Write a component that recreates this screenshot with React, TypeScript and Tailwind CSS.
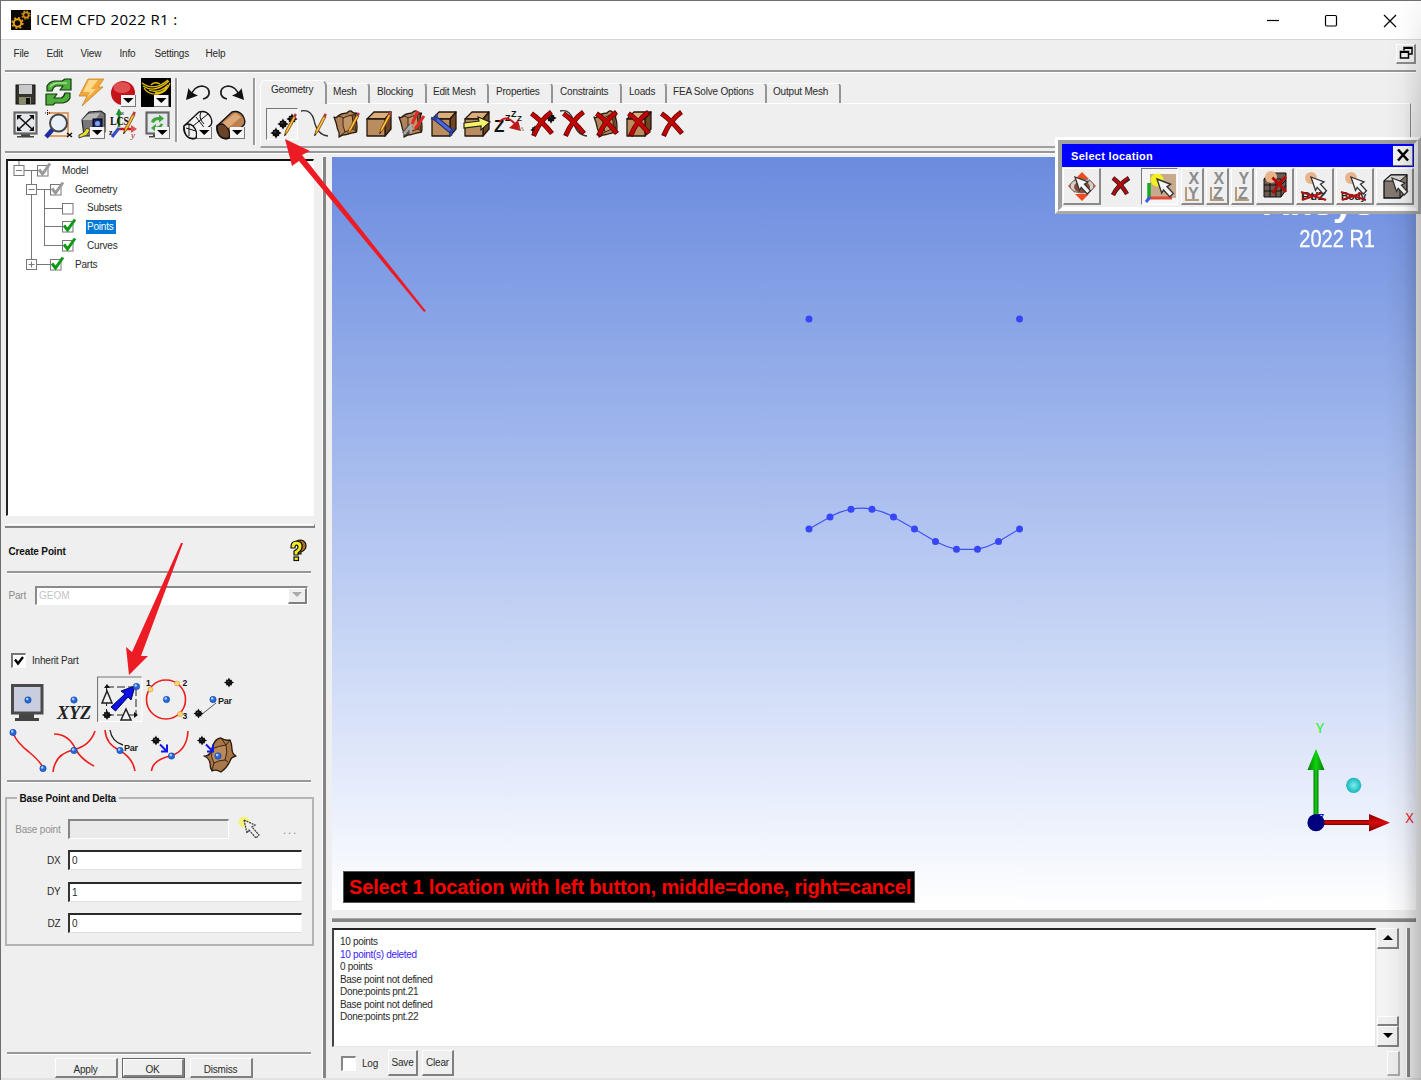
import React from "react";

type Kids = { children?: React.ReactNode };

/* ---------- shared drawing parts ---------- */

function Ico({ children, w = 33, h = 32, c = "" }: Kids & { w?: number; h?: number; c?: string }) {
  return (
    <svg width={w} height={h} viewBox={`0 0 ${w} ${h}`} className={`shrink-0 ${c}`} fill="none">
      {children}
    </svg>
  );
}

const Drop = ({ x = 16, y = 17 }) => (
  <g transform={`translate(${x} ${y})`}>
    <rect width="15" height="12" fill="#777" />
    <rect width="14" height="11" fill="#f4f4f4" />
    <path d="M2 3h10.500l-5.250 5z" fill="#000" />
  </g>
);

const Pencil = ({ x = 0, y = 0 }) => (
  <g transform={`translate(${x} ${y})`}>
    <path d="M17.500 28l1.200-5.500 7.800-14.500 2.300 1.200-7.800 14.600z" fill="#f0a020" stroke="#6b3c08" strokeWidth=".7" />
    <path d="M20 23l7-13" stroke="#ffd060" strokeWidth=".9" />
    <path d="M26.200 8.200l1.400-2.900 2.300 1.200-1.300 3z" fill="#b03a48" />
    <path d="M17.500 28l.4-2.500 1.500 1z" fill="#222" />
  </g>
);

const Box = () => (
  <g stroke="#22160c" strokeWidth="1.300" strokeLinejoin="round">
    <path d="M4 11l7-7h17l-6 7z" fill="#dcae7c" />
    <path d="M22 11l6-7v17l-6 7z" fill="#6e4523" />
    <path d="M4 11h18v17H4z" fill="#b98d60" />
  </g>
);

const Surf = () => (
  <g stroke="#2a1a0e" strokeWidth="1.300" strokeLinejoin="round">
    <path d="M3 9q2 1.500 4-1 3-2.500 9-3 2-2.500 4-2 3 3 5.500 2-2 4 0 8 1 7 0 11-5 1-10 2.500-4 0-7.500 2.500 1-4-1.500-8-1-6-3.500-12z" fill="#b0835a" />
    <path d="M7 8q5 1 5 2M12 10q4-2 9-3 2 7 1 14-4 1-8 3-3-6-2-14zM14 24l-5 4" strokeWidth=".9" fill="#c39668" />
    <path d="M21 7l3.500-1q-1.500 6 .5 17l-3-2q1-7-1-14z" fill="#8a5c35" strokeWidth=".8" />
  </g>
);

const RedX = ({ x = 0, y = 0, s = 1 }) => (
  <g transform={`translate(${x} ${y}) scale(${s})`}>
    <path d="M5.500 5.500q10 7 20.500 20M25.500 4Q14 12 7.500 28" stroke="#5a0000" strokeWidth="5" />
    <path d="M6 6q10 7 19.500 19M25 4.500Q14 12 8 27" stroke="#c00505" strokeWidth="3.600" />
  </g>
);

const Diamond = ({ x = 0, y = 0, s = 1 }) => (
  <g transform={`translate(${x} ${y}) scale(${s})`}>
    <path d="M0-6l1.500 3.500L3.500-3.500 3-1.500 6 0 3 1.500 3.500 3.500 1.500 3 0 6l-1.500-3-2 .5.500-2L-6 0l3-1.500-.5-2 2 .5z" fill="#0a0a0a" />
    <circle r="3.600" fill="#111" />
    <circle cx="-1" cy="-1.200" r=".7" fill="#777" />
  </g>
);

const Ball = ({ x = 0, y = 0 }) => (
  <g>
    <circle cx={x} cy={y} r="3.200" fill="#2468dc" stroke="#123f94" strokeWidth=".5" />
    <circle cx={x - 0.8} cy={y - 1} r="1.200" fill="#b8d4ff" />
  </g>
);

const Cursor = ({ x = 0, y = 0, s = 1 }) => (
  <path
    transform={`translate(${x} ${y}) scale(${s})`}
    d="M0 0l13 5-3.500 2.200 6 6.500-3.300 3.300-6-6.600L4.500 13.500z"
    fill="#f6f6f6"
    stroke="#333"
    strokeWidth="1.300"
  />
);

const Screen = () => (
  <g>
    <path d="M12 24h9v3h4v1.500H8V27h4z" fill="#444" />
    <rect x="5.500" y="3.500" width="22" height="21" fill="#e4e8ec" stroke="#666" strokeWidth="2.200" />
  </g>
);

const Cyl = ({ solid = false }) => (
  <g stroke="#111" strokeWidth="1.400" strokeLinejoin="round">
    <path d="M2 17L17 3q7-2 11 4 3 5 1 9L14 29q-5 2-9-2-4-4-3-10z" fill={solid ? "#b98052" : "#f2f2f2"} />
    <path d="M2 17q4-4 9 0 5 5 3 12-6 2-10-3-2-4-2-9z" fill={solid ? "#6b4326" : "#f2f2f2"} />
    {solid ? <path d="M8 14L20 4l6 4-13 11z" fill="#dca878" stroke="none" /> : <path d="M11 17L26 5M4 19l10 3M7 15v12M14 8l10 13M19 3q-3 6 3 12" strokeWidth="1" />}
  </g>
);

/* ---------- window chrome ---------- */

function Rule({ c = "" }: { c?: string }) {
  return <div className={`h-[3px] shrink-0 border-t-2 border-b border-t-[#979797] border-b-white ${c}`} />;
}

function TitleBar() {
  return (
    <div className="flex h-[39px] shrink-0 items-center border-b border-[#d6d6d6] bg-white pb-[1px] pl-[10px]">
      <Ico w={20} h={20}>
        <rect width="20" height="20" fill="#0b0906" />
        <circle cx="6.500" cy="13" r="3.700" stroke="#e8a01c" strokeWidth="2" />
        <circle cx="6.500" cy="13" r="5.300" stroke="#e8a01c" strokeWidth="1.600" strokeDasharray="2 2.160" />
        <circle cx="15" cy="5" r="2.600" stroke="#d08a18" strokeWidth="1.700" />
        <circle cx="15" cy="5" r="4" stroke="#d08a18" strokeWidth="1.300" strokeDasharray="1.600 1.540" />
      </Ico>
      <span className="ml-[5px] flex-1 whitespace-nowrap font-['Open_Sans',sans-serif] text-[15px] tracking-[0.350px] text-black">ICEM CFD 2022 R1 :</span>
      <Ico w={160} h={20}>
        <path d="M6 10.500h12" stroke="#000" strokeWidth="1.200" />
        <rect x="64.500" y="5.500" width="11" height="10.500" rx="1.200" stroke="#000" strokeWidth="1.200" />
        <path d="M123 5l12 12M135 5l-12 12" stroke="#000" strokeWidth="1.200" />
      </Ico>
    </div>
  );
}

function MenuBar() {
  return (
    <div className="flex h-[30px] shrink-0 items-center pb-[4px] pl-[12.500px]">
      <span className="w-[33px]">File</span>
      <span className="w-[34px]">Edit</span>
      <span className="w-[39px]">View</span>
      <span className="w-[35px]">Info</span>
      <span className="w-[51px]">Settings</span>
      <span>Help</span>
      <div className="mt-[1px] mr-[5px] ml-auto flex h-[20px] w-[20px] items-center justify-center border-t border-r-2 border-b-2 border-l border-t-white border-r-[#8a8a8a] border-b-[#8a8a8a] border-l-white">
        <Ico w={14} h={14}>
          <path d="M5 4.500V1.500h8v6.500h-3M5 2.300h8" stroke="#000" strokeWidth="1.500" />
          <path d="M1.500 5.500h8V12h-8zM1.500 6.300h8" stroke="#000" strokeWidth="1.500" />
        </Ico>
      </div>
    </div>
  );
}

function MainIcons() {
  return (
    <div className="flex pt-[4px] pl-[8px]">
      <div className="grid h-[64px] w-[165px] grid-cols-5">
        <Ico>
          <rect x="7" y="8" width="19" height="19" fill="#34342c" stroke="#111" />
          <rect x="10" y="8" width="13" height="9" fill="#c9c9c9" />
          <rect x="10" y="20" width="12" height="7" fill="#8a8a6a" />
          <rect x="17" y="21" width="4" height="6" fill="#111" />
        </Ico>
        <Ico>
          <g fill="#4fae3c" stroke="#0f3a0c" strokeWidth="1.200" strokeLinejoin="round">
            <path d="M5 14V9q2-4 7-5h8l3-2h6v11h-11l3-4h-7q-3 1-4 5z" />
            <path d="M28 16v5q-2 4-7 5h-8l-2 2H4V17h11l-3 4h7q3-1 4-5z" />
          </g>
          <path d="M8 10q3-4 8-4h9" stroke="#a2e08c" strokeWidth="1.500" />
        </Ico>
        <Ico>
          <path d="M13 2h16l-6 8h5L7 29l5-10H4z" fill="#f2a83a" stroke="#c98428" strokeWidth=".8" />
          <path d="M14 3h9l-7 9h5l-9 9 3-6H8z" fill="#ffd98a" />
        </Ico>
        <Ico>
          <circle cx="15" cy="16" r="12" fill="#c3141c" />
          <ellipse cx="14" cy="10.500" rx="8.500" ry="5.500" fill="#ee6a66" opacity=".7" />
          <Drop x={13} y={18} />
        </Ico>
        <Ico>
          <rect x="0" y="1" width="30" height="29" fill="#000" />
          <path d="M1 6q12 9 26-3M2 9q12 8 26-5M3 11q4 7 14 6 9-2 12-11M10 8q3-4 9-1M8 13q10 4 19-5M14 16q8 0 12-6" stroke="#e6c010" strokeWidth="1.300" />
          <Drop x={13} y={18} />
        </Ico>
        <Ico>
          <Screen />
          <path d="M10 8l13 12M23 8L10 20" stroke="#111" strokeWidth="1.600" />
          <path d="M8 6h5l-5 5zM25 6h-5l5 5zM8 22h5l-5-5zM25 22h-5l5-5z" fill="#111" />
        </Ico>
        <Ico>
          <path d="M5 4h21v23H5" stroke="#d8863c" strokeWidth="1.500" />
          <path d="M3 4h5M5.500 1v6" stroke="#111" strokeDasharray="1 1" />
          <path d="M11 20l-7 8" stroke="#1a2ea0" strokeWidth="4.500" />
          <circle cx="16.500" cy="14" r="8.500" fill="#e6eefa" fillOpacity=".9" stroke="#444" strokeWidth="2" />
          <path d="M25 24l5 4M30 24l-5 4" stroke="#111" strokeWidth="1.500" />
        </Ico>
        <Ico>
          <path d="M7 11l7-8 12-1 4 3v18l-7 4H9z" fill="#777" stroke="#222" strokeWidth="1.200" />
          <path d="M7 11l6-6 12-1-5 7z" fill="#b8b8b8" />
          <rect x="18" y="10" width="9" height="9" fill="#16246e" stroke="#000" />
          <circle cx="22.500" cy="14.500" r="2.500" fill="#88a4e8" />
          <path d="M12 19l-4 5-4 2v3l8-3 3-5z" fill="#e8e020" stroke="#444" />
          <Drop x={15} y={18} />
        </Ico>
        <Ico>
          <path d="M11 18V4M9 6l2-4 2 4" stroke="#209030" strokeWidth="2.500" />
          <path d="M11 20h13" stroke="#d01818" strokeWidth="2.500" />
          <path d="M23 16l6 4-6 4z" fill="#e05050" />
          <path d="M11 19L4 28" stroke="#3a48c0" strokeWidth="3" />
          <text x="2" y="16" fontFamily="Liberation Serif, serif" fontWeight="bold" fontSize="12" fill="#111" textLength="19" lengthAdjust="spacingAndGlyphs">LCS</text>
          <text x="13" y="6" fontFamily="Liberation Sans, sans-serif" fontSize="6" fill="#111">x</text>
          <text x="1" y="26" fontFamily="Liberation Serif, serif" fontWeight="bold" fontSize="8" fill="#111">z</text>
          <text x="23" y="29" fontFamily="Liberation Serif, serif" fontStyle="italic" fontSize="9" fill="#911">y</text>
          <Pencil x={-2} y={-3} />
        </Ico>
        <Ico>
          <Screen />
          <path d="M10 13q1-5 8-5V5.500l5 4-5 4V11q-4 0-5 3zM22 15q-1 5-7 5.500V23l-5-4 5-4v2.500q4 0 4.500-3z" fill="#3fa43a" />
          <Drop x={14} y={18} />
        </Ico>
      </div>
      <div className="mt-[1px] mr-[4px] ml-[1px] h-[64px] w-[3px] border-r border-l-2 border-r-white border-l-[#9a9a9a]" />
      <div className="grid h-[64px] w-[66px] grid-cols-2">
        <Ico>
          <path d="M8 20q4-11 12-11 8 1 7 8-1 4-6 5" stroke="#1a1a1a" strokeWidth="1.700" />
          <path d="M4 23l2.500-12q2 5 9.500 7.500z" fill="#111" />
        </Ico>
        <Ico>
          <path d="M25 20Q21 9 13 9q-8 1-7 8 1 4 6 5" stroke="#1a1a1a" strokeWidth="1.700" />
          <path d="M29 23l-2.500-12q-2 5-9.500 7.500z" fill="#111" />
        </Ico>
        <Ico><Cyl /><Drop x={15} y={18} /></Ico>
        <Ico><Cyl solid /><Drop x={15} y={18} /></Ico>
      </div>
      <div className="mt-[1px] ml-[5px] h-[67px] w-[3px] border-r border-l-2 border-r-white border-l-[#9a9a9a]" />
    </div>
  );
}

function Tab({ children, c }: Kids & { c: string }) {
  return (
    <div className={`relative mt-[3px] h-[20px] shrink-0 rounded-tr-[4px] border-t border-r-2 border-t-white border-r-[#959595] leading-[16px] whitespace-nowrap ${c}`}>
      {children}
    </div>
  );
}

function GeometryTools() {
  return (
    <div className="flex h-[34px] w-[423px]">
      <div className="h-[32px] w-[32px] shrink-0 border border-t-[#777] border-r-white border-b-white border-l-[#777] bg-[#f2f2f2]">
        <Ico w={31} h={31}>
          <Diamond x={9} y={24} s={0.95} />
          <Diamond x={16} y={15} s={0.95} />
          <Diamond x={25} y={10} s={0.95} />
          <Pencil x={0} y={-1} />
        </Ico>
      </div>
      <Ico w={33}><path d="M3 3q10-2 13 9 3 15 14 16" stroke="#333" strokeWidth="1.300" /><Pencil x={-1} /></Ico>
      <Ico w={32}><Surf /><Pencil x={-1} y={-1} /></Ico>
      <Ico w={33}><Box /><Pencil x={-1} y={-2} /></Ico>
      <Ico w={32}>
        <Surf />
        <path d="M8 26l7-9" stroke="#555" strokeWidth="5" />
        <path d="M8 26l8-10M15 25q-1-7 2-11" stroke="#aaa" strokeWidth="2.600" />
        <path d="M16 16l6-13M19 21l9-13" stroke="#e02a2a" strokeWidth="3" />
      </Ico>
      <Ico w={33}>
        <Box />
        <path d="M7 10l16 13" stroke="#122266" strokeWidth="5" />
        <path d="M7 10l16 13" stroke="#4a68d8" strokeWidth="3" />
        <path d="M3 10l5 1 1-5M27 21l-4 2v5" stroke="#2a429e" strokeWidth="2.500" />
      </Ico>
      <Ico w={32}>
        <Box />
        <path d="M3 15l15-2-1-4 12 5-9 8v-4L3 20z" fill="#f4f46a" stroke="#222" strokeWidth="1.200" />
      </Ico>
      <Ico w={33}>
        <g fontFamily="Liberation Sans, sans-serif" fontWeight="bold" fill="#111">
          <text x="1" y="24" fontSize="17">Z</text>
          <text x="12" y="13" fontSize="9">Z</text>
          <text x="18" y="9" fontSize="9">Z</text>
          <text x="24" y="13" fontSize="8">Z</text>
        </g>
        <path d="M6 14q8-8 16 2" stroke="#c01818" strokeWidth="1.800" />
        <path d="M28 23l-12-3 9-8z" fill="#c01818" />
        <path d="M25 20h5v4" stroke="#777" strokeDasharray="2 1" />
      </Ico>
      <Ico w={32}><Diamond x={25} y={10} s={0.95} /><Diamond x={9} y={22} s={0.8} /><RedX /></Ico>
      <Ico w={33}><path d="M2 3q10-2 13 9 3 15 14 16" stroke="#333" strokeWidth="1.300" /><RedX /></Ico>
      <Ico w={32}><Surf /><RedX /></Ico>
      <Ico w={33}><Box /><RedX /></Ico>
      <Ico w={32}><RedX /></Ico>
    </div>
  );
}

function ToolTabs() {
  return (
    <div className="ml-[4px] w-[1151px] pt-[7px]">
      <div className="flex h-[23px]">
        <div className="relative z-10 h-[24px] w-[67px] rounded-t-[6px] border-t border-r-2 border-l border-t-white border-r-[#959595] border-l-white bg-[#efefef] pl-[10px] leading-[18px]">
          Geometry
        </div>
        <Tab c="w-[43px] pl-[6px]">Mesh</Tab>
        <Tab c="w-[57px] pl-[7px]">Blocking</Tab>
        <Tab c="w-[62px] pl-[6px]">Edit Mesh</Tab>
        <Tab c="w-[64px] pl-[7px]">Properties</Tab>
        <Tab c="w-[69px] pl-[7px]">Constraints</Tab>
        <Tab c="w-[45px] pl-[7px]">Loads</Tab>
        <Tab c="w-[100px] pl-[6px]">FEA Solve Options</Tab>
        <Tab c="w-[74px] pl-[6px]">Output Mesh</Tab>
      </div>
      <div className="h-[45px] border border-b-2 border-t-white border-r-[#8a8a8a] border-b-[#a0a0a0] border-l-white pt-[4px] pl-[5px]">
        <GeometryTools />
      </div>
    </div>
  );
}

/* ---------- left column ---------- */

const Check = ({ x, on, gray }: { x: number; on?: boolean; gray?: boolean }) => (
  <g>
    <rect x={x - 5.5} y="4.500" width="10.500" height="10.500" fill="#fff" stroke="#777" />
    {on && <path d={`M${x - 4} 8.500l3.500 4.500L${x + 7} 2.500`} stroke={gray ? "#9a9a9a" : "#0b9a14"} strokeWidth="3" />}
  </g>
);

const Expander = ({ x, plus }: { x: number; plus?: boolean }) => (
  <g stroke="#777">
    <rect x={x - 5} y="4.500" width="10" height="10" fill="#fff" />
    <path d={`M${x - 3} 9.500h6`} />
    {plus && <path d={`M${x} 6.500v6`} />}
  </g>
);

function TreeRow({ w, label, sel, children }: Kids & { w: number; label: string; sel?: boolean }) {
  return (
    <div className="flex h-[18.750px] items-center">
      <svg width={w} height={18.75} className="shrink-0 overflow-visible" fill="none">{children}</svg>
      <span className={sel ? "ml-[-1px] bg-[#0078d7] px-[1px] pr-[2px] leading-[14px] text-white" : ""}>{label}</span>
    </div>
  );
}

function ModelTree() {
  return (
    <div className="mt-[5px] ml-[5px] h-[357px] w-[308px] shrink-0 border-t-2 border-r border-b border-l-2 border-t-[#111] border-r-white border-b-white border-l-[#222] bg-white">
      <TreeRow w={54} label="Model">
        <path d="M11 0v5M11 9.500h20M23.500 9.500V28" stroke="#777" />
        <Expander x={11} />
        <Check x={35} on gray />
      </TreeRow>
      <TreeRow w={67} label="Geometry">
        <path d="M23.500 0v85M23.500 9.500h20M36.500 9.500V66" stroke="#777" />
        <Expander x={23.5} />
        <Check x={48} on gray />
      </TreeRow>
      <TreeRow w={79} label="Subsets">
        <path d="M36.500 9.500h20" stroke="#777" />
        <Check x={60} />
      </TreeRow>
      <TreeRow w={79} label="Points" sel>
        <path d="M36.500 9.500h20" stroke="#777" />
        <Check x={60} on />
      </TreeRow>
      <TreeRow w={79} label="Curves">
        <path d="M36.500 9.500h20" stroke="#777" />
        <Check x={60} on />
      </TreeRow>
      <TreeRow w={67} label="Parts">
        <path d="M23.500 9.500h20" stroke="#777" />
        <Expander x={23.5} plus />
        <Check x={48} on />
      </TreeRow>
    </div>
  );
}

const red = { stroke: "#f01c1c", strokeWidth: 1.6 };

function PointMethods() {
  return (
    <div className="mt-[7px] ml-[2px] grid w-[235px] grid-cols-5">
      <Ico w={47} h={49}>
        <path d="M16 38h15v4h5v3H12v-3h4z" fill="#444" />
        <rect x="9.500" y="9.500" width="29.500" height="27.500" fill="#c8cede" stroke="#4a4a4a" strokeWidth="3" />
        <Ball x={25} y={24} />
      </Ico>
      <Ico w={47} h={49}>
        <text x="7" y="43" fontFamily="Liberation Serif, serif" fontStyle="italic" fontWeight="bold" fontSize="19" fill="#222" textLength="34" lengthAdjust="spacingAndGlyphs">XYZ</text>
        <Ball x={24} y={24} />
      </Ico>
      <Ico w={47} h={49}>
        <path d="M.5 46V1h44" stroke="#777" strokeWidth="1.200" />
        <path d="M1 45.500H45V2" stroke="#fff" />
        <path d="M9 11h29M9.500 11v28M39 12v26M9 39h29" stroke="#222" strokeDasharray="8 3" />
        <path d="M7 12l3-4 3 4zM41 39l-4 3v-6z" fill="#111" />
        <Diamond x={10} y={39} s={0.85} />
        <path d="M14 31L28 18l-4-3 14-5-4 14-3-3-12.500 14z" fill="#0a12e6" stroke="#000060" />
        <path d="M5 27l5-12 5 12zM24 44l5-11 5 11z" fill="#f2f2f2" stroke="#222" strokeWidth="1.500" />
        <Ball x={39.500} y={10.500} />
      </Ico>
      <Ico w={47} h={49}>
        <circle cx="22" cy="23.500" r="19.500" {...red} />
        <circle cx="6.500" cy="13.500" r="2.500" fill="#f8d870" stroke="#c89a30" strokeWidth=".6" />
        <circle cx="33" cy="7.500" r="2.500" fill="#f8d870" stroke="#c89a30" strokeWidth=".6" />
        <circle cx="36" cy="38" r="2.500" fill="#f8d870" stroke="#c89a30" strokeWidth=".6" />
        <Ball x={22.500} y={23.500} />
        <g fontFamily="Liberation Sans, sans-serif" fontWeight="bold" fontSize="8.500" fill="#111">
          <text x="2" y="9.500">1</text><text x="38.500" y="9.500">2</text><text x="38.500" y="43">3</text>
        </g>
      </Ico>
      <Ico w={47} h={49}>
        <path d="M10 39l15-12" stroke="#555" />
        <Diamond x={7.500} y={37.500} s={0.85} />
        <Diamond x={38} y={6.500} s={0.85} />
        <Ball x={22} y={23.500} />
        <text x="27" y="28" fontFamily="Liberation Sans, sans-serif" fontWeight="bold" fontSize="9" fill="#222">Par</text>
      </Ico>
      <Ico w={47} h={54}>
        <path d="M10 8q4 10 16 19 12 10 14 16" {...red} />
        <Ball x={10} y={7.500} /><Ball x={40} y={43.500} />
      </Ico>
      <Ico w={47} h={54}>
        <path d="M4 9q15 0 22 16 6 10 18 16M3 47q2-18 20-22 17-4 22-19" {...red} />
        <Ball x={24} y={25.500} />
      </Ico>
      <Ico w={47} h={54}>
        <path d="M13 5q2 12 13 15" stroke="#222" strokeWidth="1.300" />
        <path d="M8 5q1 14 14 20 14 8 16 21" {...red} />
        <Ball x={23} y={25.500} />
        <text x="27" y="26" fontFamily="Liberation Sans, sans-serif" fontWeight="bold" fontSize="9" fill="#222">Par</text>
      </Ico>
      <Ico w={47} h={54}>
        <path d="M7.500 46q1-11 19-15Q43 26 44 6" {...red} />
        <Diamond x={12} y={15.500} s={0.85} />
        <path d="M16 19.500l6 6M17 26.500h6v-7" stroke="#1018e8" strokeWidth="2" />
        <Ball x={27.500} y={31} />
      </Ico>
      <Ico w={47} h={54}>
        <g stroke="#2a1a0e" strokeWidth="1.300" strokeLinejoin="round">
          <path d="M13 31q6 1 8-8 3-10 9-10 4 3 9 2 2 4 2 9 0 5 4 7-5 1-6 5-3 7-9 11-5-3-9-1-2-3-2-8-1-5-6-7z" fill="#a87848" />
          <path d="M21 24q6-3 14-4 2 7-1 15-6 0-11 3-4-6-2-14zM30 13l5 7M35 20l4-5M34 35l3 2M23 38l-2 7" fill="#b98a5a" strokeWidth=".9" />
        </g>
        <Diamond x={11} y={15.500} s={0.85} />
        <path d="M15 19.500l6 6M16 26.500h6v-7" stroke="#1018e8" strokeWidth="2" />
        <Ball x={27} y={31} />
      </Ico>
    </div>
  );
}

function Field({ label, value }: { label: string; value: string }) {
  return (
    <div className="flex h-[31.300px] items-center">
      <span className="w-[53.500px] text-right">{label}</span>
      <div className="ml-[7.500px] h-[20px] w-[234px] border-t-2 border-r border-b border-l-2 border-t-[#2a2a2a] border-r-[#f8f8f8] border-b-[#e0e0e0] border-l-[#333] bg-white pl-[2px] leading-[17px]">{value}</div>
    </div>
  );
}

function Btn({ children, c }: Kids & { c: string }) {
  return (
    <div className={`flex items-center justify-center border-t border-r-2 border-b-2 border-l border-t-white border-r-[#808080] border-b-[#808080] border-l-white ${c}`}>{children}</div>
  );
}

function LeftColumn() {
  return (
    <div className="flex w-[321px] shrink-0 flex-col">
      <ModelTree />
      <div className="mt-[8px] ml-[4px] h-[4px] w-[310px] shrink-0 border-t border-r border-b-2 border-t-white border-r-[#777] border-b-[#858585]" />
      <div className="flex h-[43px] shrink-0 items-center pl-[7.500px] text-[10px] font-bold tracking-[-0.150px] text-[#111]">
        <span className="pt-[3px]">Create Point</span>
        <Ico w={18} h={24} c="mr-[15px] ml-auto">
          <path d="M5 8q0-5 6-5 5 1 5 6 0 4-5 6v2H7v-4q5-1 5-4 0-2-2-2-1 0-1 2z" transform="translate(1 -1)" fill="#b07020" stroke="#111" strokeWidth="1.200" />
          <path d="M2 9q0-6 6-6 6 1 5 6 0 3-4 6v2H5v-4q4-2 4-4 0-2-1.500-2Q6 7 6 10H2z" fill="#f4ee18" stroke="#111" strokeWidth="1.200" />
          <rect x="5" y="19" width="4.500" height="3.500" fill="#f4ee18" stroke="#111" strokeWidth="1.200" />
        </Ico>
      </div>
      <Rule c="ml-[6px] w-[304px]" />
      <div className="mt-[11px] flex h-[20px] shrink-0 items-center pl-[7.500px] text-[#8a8a8a]">
        <span className="w-[26.500px]">Part</span>
        <div className="flex h-[19px] w-[273px] items-center border-t-2 border-r border-b border-l-2 border-t-[#8a8a8a] border-r-white border-b-white border-l-[#8a8a8a] bg-white pl-[2px] text-[#c4c4c4]">
          <span className="tracking-[0px]">GEOM</span>
          <Btn c="ml-auto h-[16px] w-[19px] bg-[#efefef]">
            <Ico w={10} h={6}><path d="M0 0h10L5 5z" fill="#aaa" /></Ico>
          </Btn>
        </div>
      </div>
      <div className="mt-[46px] flex h-[18px] shrink-0 items-center pl-[10px]">
        <div className="h-[15px] w-[15px] border-t-2 border-r border-b border-l-2 border-t-[#777] border-r-white border-b-white border-l-[#777] bg-white">
          <Ico w={12} h={12}><path d="M2 4.500l3 4 5-6.500" stroke="#000" strokeWidth="2.400" /></Ico>
        </div>
        <span className="ml-[6px]">Inherit Part</span>
      </div>
      <PointMethods />
      <Rule c="mt-[1px] ml-[6px] w-[304px]" />
      <fieldset className="mt-[8.500px] ml-[4px] h-[154px] w-[308.500px] shrink-0 border-2 border-[#b4b4b4]">
        <legend className="ml-[9.500px] px-[3px] text-[10px] leading-[13px] font-bold tracking-[-0.150px] text-[#111]">Base Point and Delta</legend>
        <div className="mt-[9px] flex h-[31.300px] items-center text-[#8f8f8f]">
          <span className="w-[53.500px] text-right whitespace-nowrap">Base point</span>
          <div className="ml-[7.500px] h-[20px] w-[161px] border-t-2 border-r border-b border-l-2 border-t-[#858585] border-r-white border-b-white border-l-[#858585] bg-[#eaeaea]" />
          <Ico w={28} h={26} c="ml-[8px]">
            <circle cx="7" cy="6" r="5.500" fill="#f6f66a" opacity=".85" />
            <path d="M7 4l11 5-3 2 7 8-3 3-7-8-2 3z" fill="#f0f0f0" stroke="#444" strokeWidth="1.300" strokeDasharray="2 .8" />
          </Ico>
          <span className="mt-[2px] ml-[18px] text-[12px] leading-[12px] tracking-[1.700px]">...</span>
        </div>
        <Field label="DX" value="0" />
        <Field label="DY" value="1" />
        <Field label="DZ" value="0" />
      </fieldset>
      <div className="mt-auto">
        <Rule c="ml-[6px] w-[304px]" />
        <div className="mt-[3px] ml-[53.500px] flex h-[20px]">
          <Btn c="h-[20px] w-[63px] pt-[4px]">Apply</Btn>
          <div className="ml-[4px] h-[20px] w-[63px] border border-[#666]"><Btn c="h-[18px] w-[61px] pt-[4px]">OK</Btn></div>
          <Btn c="ml-[5px] h-[20px] w-[63px] pt-[4px]">Dismiss</Btn>
        </div>
      </div>
    </div>
  );
}

/* ---------- 3D view ---------- */

const curve: [number, number][] = [
  [809, 529], [830, 517], [851, 509.300], [872, 509.300], [893.500, 517], [914.500, 529], [935.500, 541.500], [956.500, 549.300], [977.500, 549.300], [998.500, 541.500], [1019.500, 529],
];

function Viewport() {
  return (
    <div className="relative mt-[3px] h-[753px] w-[1084px] shrink-0 overflow-hidden bg-linear-to-b from-[#6b8bde] to-white">
      <svg viewBox="332 157 1084 753" width="1084" height="753" className="absolute inset-0" fill="none">
        <path d="M809 529L830 517Q840 511 851 509.300Q862 507 872 509.300Q883 511 893.500 517L914.500 529L935.500 541.500Q946 547 956.500 549.300H977.500Q988 547 998.500 541.500L1019.500 529" stroke="#4050f4" strokeWidth="1.200" />
        {curve.map(([x, y]) => <circle key={x} cx={x} cy={y} r="3.500" fill="#3846fa" />)}
        <circle cx="809" cy="319" r="3.500" fill="#3846fa" />
        <circle cx="1019.500" cy="319" r="3.500" fill="#3846fa" />
        <defs>
          <linearGradient id="gr" x1="0" x2="1"><stop offset="0" stopColor="#067806" /><stop offset=".5" stopColor="#0fd40f" /><stop offset="1" stopColor="#067806" /></linearGradient>
          <linearGradient id="rd" x1="0" x2="0" y1="0" y2="1"><stop offset="0" stopColor="#800" /><stop offset=".5" stopColor="#d80808" /><stop offset="1" stopColor="#700" /></linearGradient>
          <radialGradient id="cy"><stop offset="0" stopColor="#7af0ee" /><stop offset="1" stopColor="#18b4bc" /></radialGradient>
        </defs>
        <text x="1317" y="823" fontFamily="Liberation Sans, sans-serif" fontSize="12" fill="#1a1af0">Z</text>
        <rect x="1313.500" y="768" width="5" height="50" fill="url(#gr)" />
        <path d="M1316 749l8.500 21h-17z" fill="url(#gr)" />
        <rect x="1320" y="820" width="50" height="5" fill="url(#rd)" />
        <path d="M1390 822.700l-21-8.700v17.400z" fill="url(#rd)" />
        <circle cx="1316" cy="822.700" r="8.600" fill="#00007e" />
        <circle cx="1353.700" cy="785.300" r="7.600" fill="url(#cy)" />
        <text x="1316" y="733" fontFamily="Noto Sans, sans-serif" fontSize="14" fill="#18f018">Y</text>
        <text x="1405.500" y="823" fontFamily="Noto Sans, sans-serif" fontSize="14" fill="#f01818">X</text>
      </svg>
      <div className="absolute top-[25px] right-[42px] text-[37px] leading-[42px] font-bold tracking-normal text-white">Ansys</div>
      <div className="absolute top-[69px] right-[41px] origin-right scale-x-[0.870] text-[23px] leading-[27px] tracking-normal whitespace-nowrap text-white [-webkit-text-stroke:0.3px_white]">2022 R1</div>
      <div className="absolute top-[714px] left-[11px] h-[32px] w-[572px] border border-[#555] bg-black pl-[5px] text-[20px] leading-[31px] font-bold tracking-[-0.150px] whitespace-nowrap text-[#f00]">
        Select 1 location with left button, middle=done, right=cancel
      </div>
    </div>
  );
}

function Messages() {
  return (
    <div className="mt-[6px] flex flex-1">
      <div className="flex w-[1068px] flex-col">
        <div className="flex h-[119px]">
          <div className="h-[119px] w-[1044px] border-t-2 border-r border-b border-l-2 border-t-[#222] border-r-[#e4e4e4] border-b-[#e4e4e4] border-l-[#444] bg-white pt-[6px] pl-[6px] leading-[12.500px] tracking-[-0.320px]">
            <div>10 points</div>
            <div className="text-[#3a20ff]">10 point(s) deleted</div>
            <div>0 points</div>
            <div>Base point not defined</div>
            <div>Done:points pnt.21</div>
            <div>Base point not defined</div>
            <div>Done:points pnt.22</div>
          </div>
          <div className="ml-[1px] flex w-[22px] flex-col bg-[#f3f3f3]">
            <Btn c="h-[21px] bg-[#efefef]"><Ico w={10} h={6}><path d="M0 5h10L5 0z" fill="#000" /></Ico></Btn>
            <div className="flex-1" />
            <Btn c="h-[10px] bg-[#efefef]" />
            <Btn c="h-[21px] bg-[#efefef]"><Ico w={10} h={6}><path d="M0 0h10L5 5z" fill="#000" /></Ico></Btn>
          </div>
        </div>
        <div className="flex items-center pt-[3px] pl-[9px]">
          <div className="h-[15px] w-[15px] border-t-2 border-r border-b border-l-2 border-t-[#858585] border-r-white border-b-white border-l-[#858585] bg-white" />
          <span className="ml-[6px] w-[26px]">Log</span>
          <Btn c="h-[26px] w-[30px]">Save</Btn>
          <Btn c="ml-[4px] h-[26px] w-[32px]">Clear</Btn>
          <div className="ml-auto h-[25px] w-[13px] border-t border-r-2 border-b-2 border-l border-t-white border-r-[#aaa] border-b-[#aaa] border-l-white" />
        </div>
      </div>
      <div className="ml-[6px] h-[149px] w-[4px] border-r-[3px] border-l border-r-[#858585] border-l-white" />
    </div>
  );
}

/* ---------- floating picker ---------- */

function PickBtn({ children, c = "w-[38px]", down }: Kids & { c?: string; down?: boolean }) {
  return (
    <div className={`flex h-[37px] shrink-0 items-center justify-center border ${down ? "border-t-[#777] border-r-white border-b-white border-l-[#777] bg-[#f4f4f4]" : "border-r-2 border-b-2 border-t-white border-r-[#8a8a8a] border-b-[#8a8a8a] border-l-white"} ${c}`}>
      {children}
    </div>
  );
}

function PlaneBtn({ a, b }: { a: string; b: string }) {
  return (
    <PickBtn c="mr-[2px] w-[23px]">
      <Ico w={20} h={34}>
        <path d="M4 18v13h13" stroke="#b59a7c" strokeWidth="2" />
        <g fontFamily="Liberation Sans, sans-serif" fontWeight="bold" fontSize="16" fill="#8c8c8c">
          <text x="6.500" y="15">{a}</text>
          <text x="6" y="29.500">{b}</text>
        </g>
      </Ico>
    </PickBtn>
  );
}

function NoGeo({ label }: { label: string }) {
  return (
    <Ico w={34} h={34}>
      <circle cx="13" cy="9" r="6" fill="#e8b48c" />
      <text x="3" y="31" fontFamily="Liberation Sans, sans-serif" fontWeight="bold" fontSize="10" fill="#222" textLength="25" lengthAdjust="spacingAndGlyphs">{label}</text>
      <path d="M3 23l25 8M27 23L4 31" stroke="#b01010" strokeWidth="2" />
      <Cursor x={13} y={8} />
    </Ico>
  );
}

function SelectLocation() {
  return (
    <div className="absolute top-[136px] left-[1054px] h-[77px] w-[366px] border-[3px] border-t-white border-r-[#b0b0b0] border-b-[#a8a8a8] border-l-white">
      <div className="h-[71px] w-[360px] border-[4px] border-t-[#a0a0a0] border-r-[#f2f2f2] border-b-white border-l-[#a0a0a0] bg-[#efefef]">
        <div className="flex h-[23px] items-center bg-[#0000ff] pr-[1px] pl-[9px] text-[11px] font-bold tracking-[0.300px] text-white">
          <span className="pt-[1px]">Select location</span>
          <div className="ml-auto flex h-[20px] w-[20px] items-center justify-center border-r border-b border-[#777] bg-[#f2f2f2]">
            <Ico w={14} h={14}><path d="M2 1.500l10 11M12 1.500l-10 11" stroke="#000" strokeWidth="2.600" /></Ico>
          </div>
        </div>
        <div className="flex pt-[1px] pl-[1px]">
          <PickBtn>
            <Ico w={34} h={34}>
              <path d="M17 3l7 7H10zM17 32l-7-7h14zM3 17l7-7v14zM31 17l-7-7v14z" fill="#f04a20" />
              <ellipse cx="17" cy="17" rx="12" ry="7" fill="#d8d0cc" stroke="#666" />
              <ellipse cx="17" cy="18" rx="8" ry="6" fill="#8a4a38" />
              <Cursor x={10} y={8} />
            </Ico>
          </PickBtn>
          <div className="flex w-[40px] items-center justify-center"><Ico w={24} h={24}><path d="M4 3q9 7 14 16M20 3Q9 10 4 20" stroke="#222" strokeWidth="4.500" /><path d="M4 3q9 7 14 16M19 3Q9 10 4 20" stroke="#b00a0a" strokeWidth="3" /></Ico></div>
          <PickBtn down c="mr-[3px] w-[37px]">
            <Ico w={36} h={34}>
              <rect x="8" y="4" width="26" height="24" fill="#c8aa8c" />
              <path d="M7 28V13" stroke="#18a828" strokeWidth="3.500" />
              <path d="M8 28h22" stroke="#e04838" strokeWidth="3" />
              <path d="M8 27l-4 5" stroke="#3858e0" strokeWidth="3" />
              <circle cx="15" cy="10" r="6.500" fill="#f2f020" />
              <Cursor x={15} y={9} s={1.05} />
            </Ico>
          </PickBtn>
          <PlaneBtn a="X" b="Y" />
          <PlaneBtn a="X" b="Z" />
          <PlaneBtn a="Y" b="Z" />
          <PickBtn c="mr-[2px] w-[38px]">
            <Ico w={34} h={34}>
              <path d="M6 10l5-6h17v17l-5 7H6z" fill="#6a5a50" stroke="#111" />
              <path d="M6 16h17M6 22h17M12 10v18M18 10v18M6 10h17v18M23 16l5-5M23 22l5-6" stroke="#111" />
              <circle cx="13" cy="8" r="6" fill="#e8b48c" />
              <g transform="translate(10 5) scale(.72)"><path d="M6 5q10 8 19 20M25 4Q14 12 7 27" stroke="#b80808" strokeWidth="4" /></g>
            </Ico>
          </PickBtn>
          <PickBtn c="mr-[2px] w-[38px]"><NoGeo label="Pt/Z" /></PickBtn>
          <PickBtn c="mr-[2px] w-[38px]"><NoGeo label="Body" /></PickBtn>
          <PickBtn c="w-[38px]">
            <Ico w={34} h={34}>
              <path d="M6 12l7-6h16v16l-7 7H6z" fill="#857a72" stroke="#111" strokeWidth="1.300" />
              <path d="M6 12l7-6h16l-7 6z" fill="#d8d4d0" stroke="#111" />
              <path d="M22 12v17" stroke="#111" />
              <Cursor x={14} y={9} />
            </Ico>
          </PickBtn>
        </div>
      </div>
    </div>
  );
}

export default function App() {
  return (
    <div className="relative flex h-[1080px] w-[1421px] flex-col overflow-hidden border-t border-l border-[#6e6e6e] bg-[#efefef] font-['Liberation_Sans',Arial,sans-serif] text-[10px] leading-[13px] tracking-[-0.200px] text-[#2a2a2a]">
      <TitleBar />
      <MenuBar />
      <Rule c="ml-[4px] w-[1411px]" />
      <div className="flex h-[78px] shrink-0">
        <MainIcons />
        <ToolTabs />
      </div>
      <Rule c="ml-[4px] w-[1411px]" />
      <div className="flex h-[924px]">
        <LeftColumn />
        <div className="mt-[3px] h-[921px] w-[4px] shrink-0 border-r-[3px] border-l border-r-[#858585] border-l-white" />
        <div className="ml-[6px] flex flex-1 flex-col">
          <Viewport />
          <div className="mt-[8px] h-[4px] w-[1084px] shrink-0 border-t border-r border-b-[3px] border-t-[#aaa] border-r-[#777] border-b-[#858585]" />
          <Messages />
        </div>
      </div>
      <div className="absolute right-0 bottom-0 left-0 h-[2px] bg-[#e2e2e2]" />
      <SelectLocation />
      <div className="pointer-events-none absolute top-0 right-0 h-[1080px] w-[36px] bg-linear-to-r from-transparent via-black/4 to-black/20 [mask-image:linear-gradient(to_bottom,rgba(0,0,0,0.1),black_180px)]" />
      <svg className="pointer-events-none absolute top-[-1px] left-[-1px]" width="450" height="700">
        <path d="M285 139l25 12-8 4L426 311l-2 1L299 161l-7 5z" fill="#ed1c24" />
        <path d="M181 543l2 0L141 656h7L129 675l-3-28 6 5z" fill="#ed1c24" />
      </svg>
    </div>
  );
}
